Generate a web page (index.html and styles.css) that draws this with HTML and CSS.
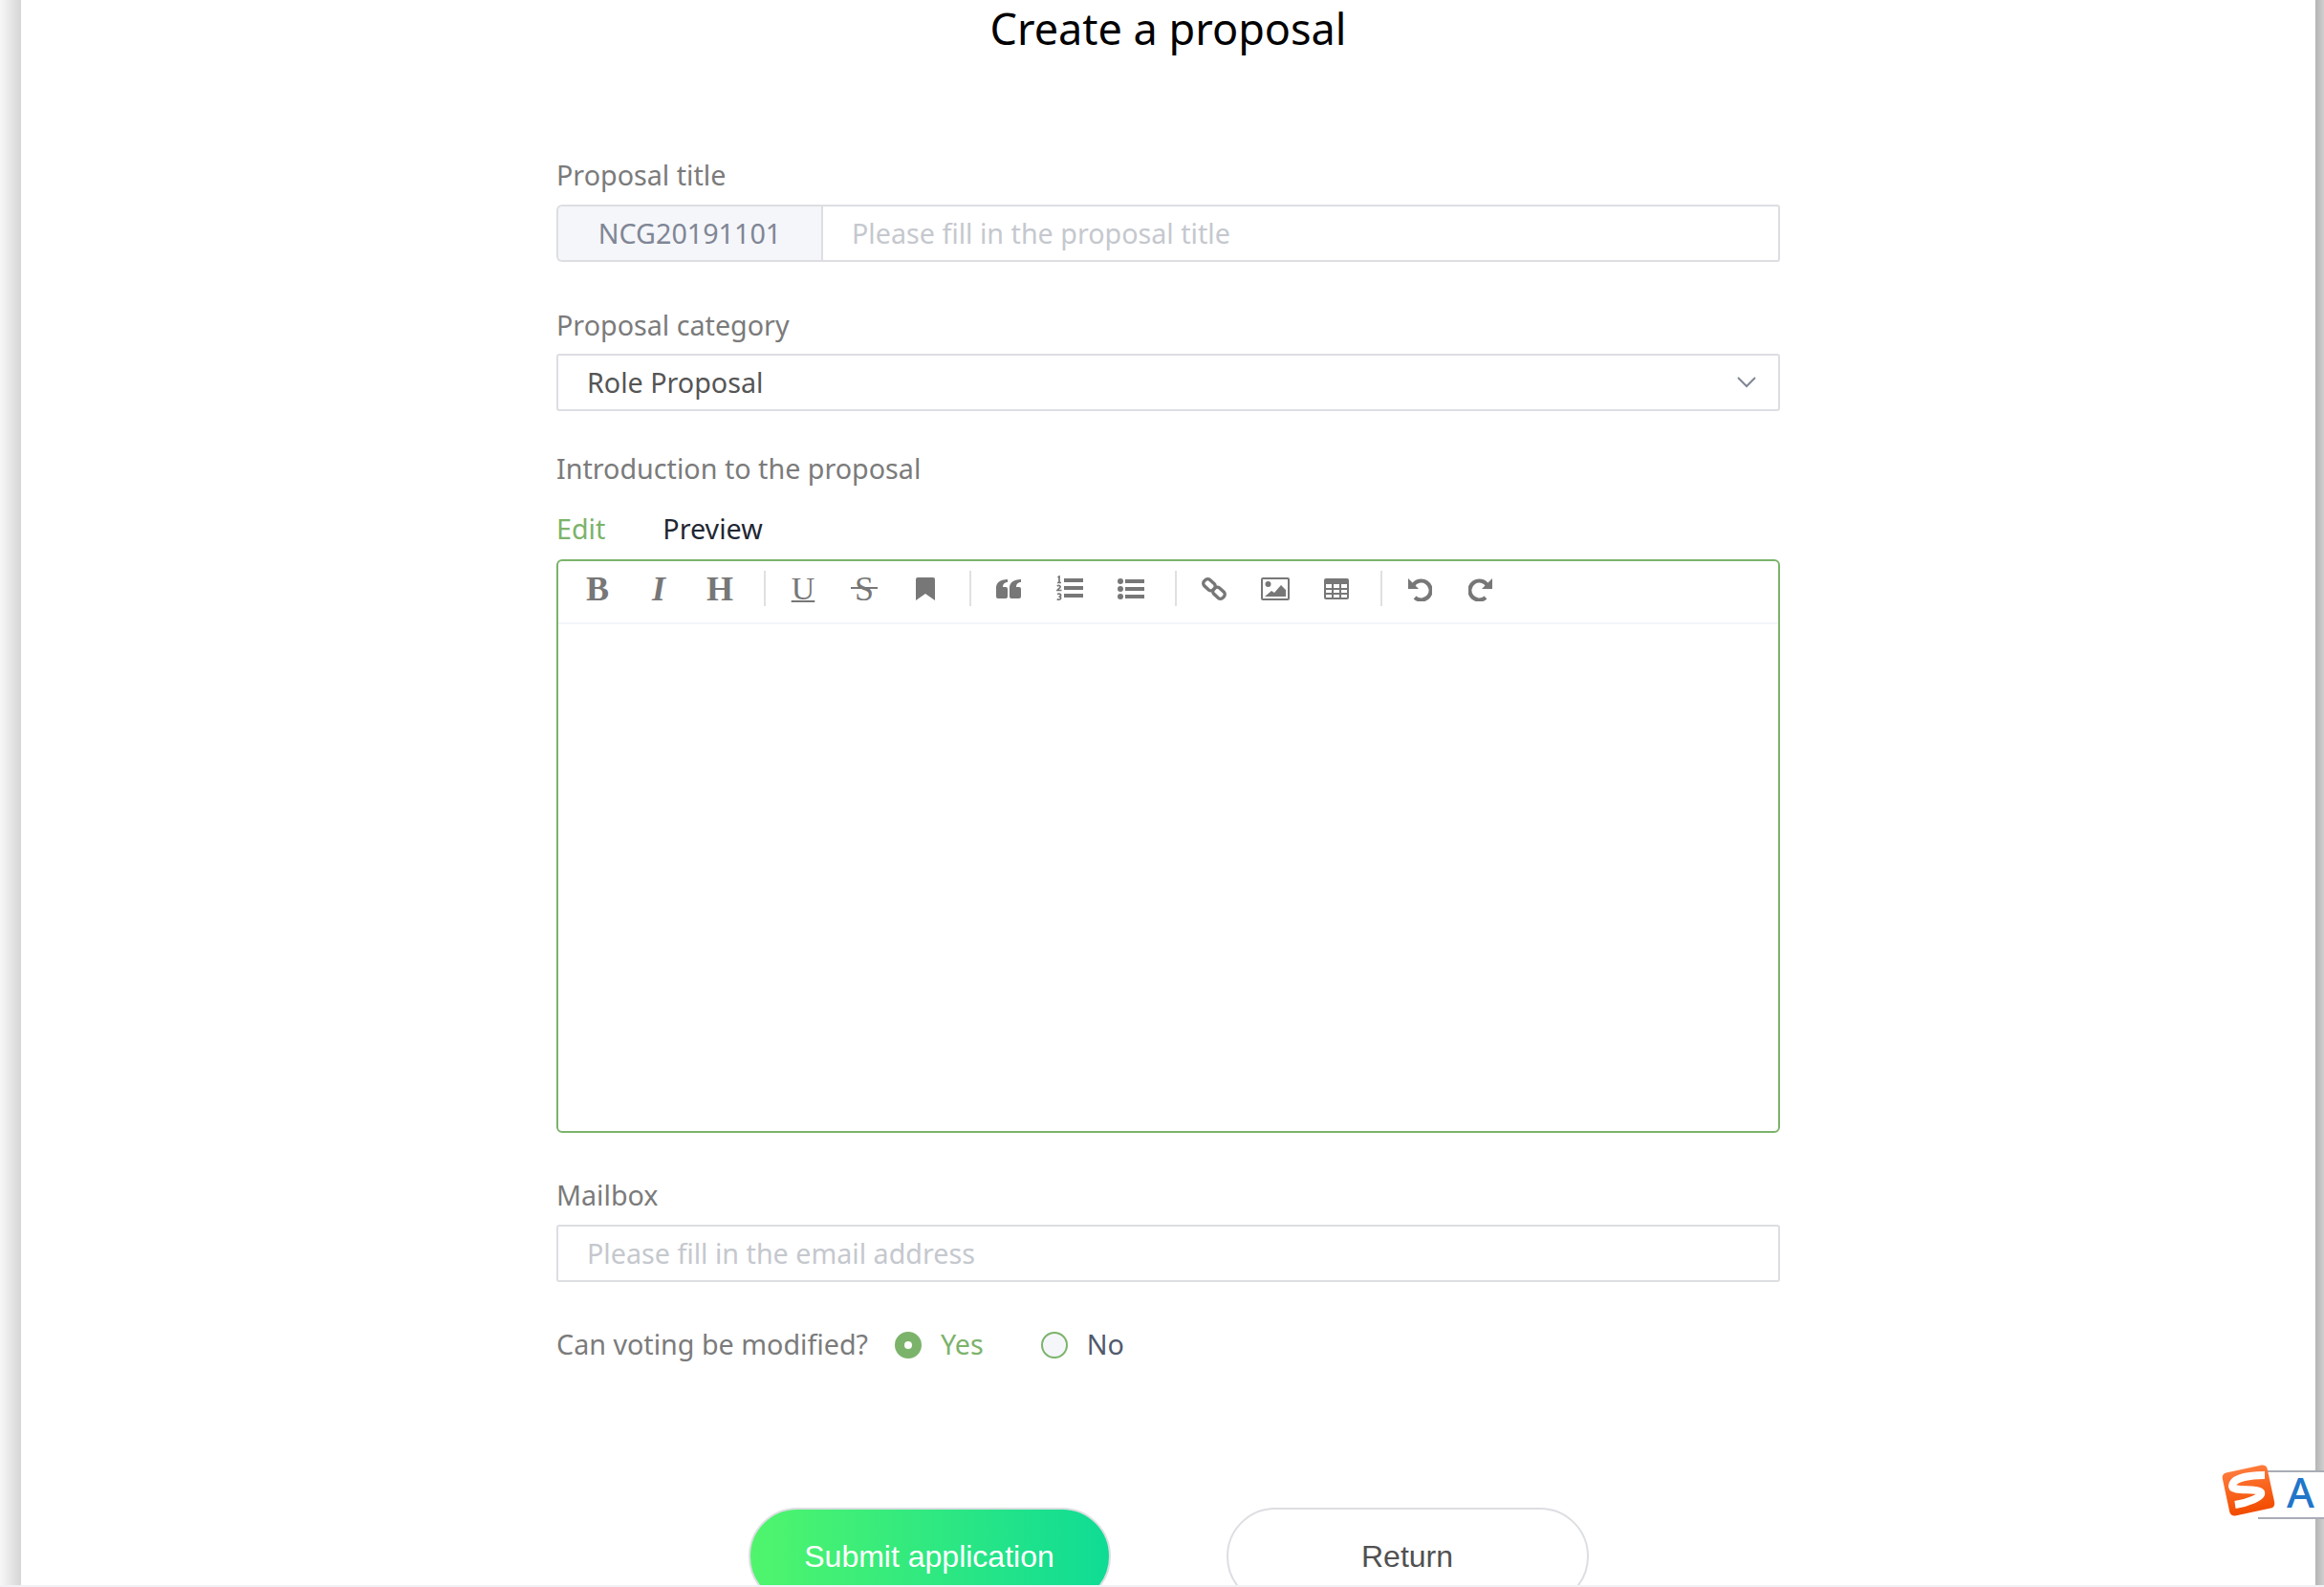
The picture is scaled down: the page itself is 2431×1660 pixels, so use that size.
FILE: index.html
```html
<!DOCTYPE html>
<html lang="en">
<head>
    <meta charset="UTF-8">
    <meta name="viewport" content="width=device-width, initial-scale=1.0">
    <title>Create a proposal</title>
    <link rel="stylesheet" href="styles.css">
</head>
<body>
    <div class="screen">
        <div class="edge-left"></div>
        <main class="page">
            <h1>Create a proposal</h1>
            <form class="proposal-form">
                <div class="field field-title">
                    <label>Proposal title</label>
                    <div class="input-group">
                        <span class="prepend">NCG20191101</span>
                        <input class="text-input" type="text" placeholder="Please fill in the proposal title">
                    </div>
                </div>

                <div class="field field-category">
                    <label>Proposal category</label>
                    <div class="select-box">
                        <span>Role Proposal</span>
                        <svg class="chevron" width="20" height="12" viewBox="0 0 20 12"><path d="M1 1l9 9 9-9" fill="none" stroke="#808695" stroke-width="2"/></svg>
                    </div>
                </div>

                <div class="field field-intro">
                    <label>Introduction to the proposal</label>
                    <div class="tabs">
                        <span class="tab active">Edit</span>
                        <span class="tab">Preview</span>
                    </div>
                    <div class="editor">
                        <div class="toolbar">
                            <span class="tool glyph bold">B</span>
                            <span class="tool glyph italic">I</span>
                            <span class="tool glyph heading">H</span>
                            <i class="sep"></i>
                            <span class="tool glyph under">U</span>
                            <span class="tool glyph strike">S</span>
                            <span class="tool">
                                <svg width="20" height="24" viewBox="0 0 20 24"><path d="M2 0h16a2 2 0 0 1 2 2v22l-10-7-10 7V2a2 2 0 0 1 2-2z" fill="#777"/></svg>
                            </span>
                            <i class="sep"></i>
                            <span class="tool">
                                <svg width="26" height="22" viewBox="0 0 26 22"><path d="M12 1v3C8.5 4 7 6.5 7 9h3a2 2 0 0 1 2 2v8a2 2 0 0 1-2 2H2a2 2 0 0 1-2-2V9.5C0 5 4 1 12 1zM26 1v3c-3.500 0-5 2.500-5 5h3a2 2 0 0 1 2 2v8a2 2 0 0 1-2 2h-8a2 2 0 0 1-2-2V9.5C14 5 18 1 26 1z" fill="#777"/></svg>
                            </span>
                            <span class="tool">
                                <svg width="28" height="28" viewBox="0 0 28 28">
                                    <path d="M8 3h20v4H8zM8 11h20v4H8zM8 19h20v4H8z" fill="#777"/>
                                    <path d="M1.5 2L3 1v6M1 7.5h4M.8 11c2-1.500 4 0 3 1.500L1 15.5h4.500M1 19.5c2-1 4 0 3.500 1.500 0 1-1 1.200-2 1.200 1.200 0 2.500.5 2 2-.5 1.300-2.500 1.300-3.800.5" fill="none" stroke="#777" stroke-width="1.7"/>
                                </svg>
                            </span>
                            <span class="tool">
                                <svg width="28" height="24" viewBox="0 0 28 24">
                                    <path d="M8 2h20v4H8zM8 10h20v4H8zM8 18h20v4H8z" fill="#777"/>
                                    <circle cx="3" cy="4" r="3" fill="#777"/><circle cx="3" cy="12" r="3" fill="#777"/><circle cx="3" cy="20" r="3" fill="#777"/>
                                </svg>
                            </span>
                            <i class="sep"></i>
                            <span class="tool">
                                <svg width="26" height="26" viewBox="0 0 26 26">
                                    <rect x="1.5" y="4.5" width="13" height="8.5" rx="3.5" transform="rotate(42 8 8.7)" fill="none" stroke="#777" stroke-width="3.4"/>
                                    <rect x="11.5" y="13" width="13" height="8.5" rx="3.5" transform="rotate(42 18 17.2)" fill="none" stroke="#777" stroke-width="3.4"/>
                                </svg>
                            </span>
                            <span class="tool">
                                <svg width="30" height="24" viewBox="0 0 30 24">
                                    <rect x="1" y="1" width="28" height="22" rx="1" fill="none" stroke="#777" stroke-width="2"/>
                                    <circle cx="7.5" cy="7" r="3" fill="#777"/>
                                    <path d="M4 20l7-6 3 2 7-8 5 5v7z" fill="#777"/>
                                </svg>
                            </span>
                            <span class="tool">
                                <svg width="26" height="22" viewBox="0 0 26 22">
                                    <rect width="26" height="22" rx="2" fill="#777"/>
                                    <path d="M2 6h6v4H2zM10 6h6v4h-6zM18 6h6v4h-6zM2 12h6v3H2zM10 12h6v3h-6zM18 12h6v3h-6zM2 17h6v3H2zM10 17h6v3h-6zM18 17h6v3h-6z" fill="#fff"/>
                                </svg>
                            </span>
                            <i class="sep"></i>
                            <span class="tool">
                                <svg width="26" height="26" viewBox="0 0 26 26"><path d="M6 9.5A10 10 0 1 1 8 22" fill="none" stroke="#777" stroke-width="4.2"/><path d="M1 2v11h11z" fill="#777"/></svg>
                            </span>
                            <span class="tool">
                                <svg width="26" height="26" viewBox="0 0 26 26"><path d="M20 9.5A10 10 0 1 0 18 22" fill="none" stroke="#777" stroke-width="4.2"/><path d="M25 2v11H14z" fill="#777"/></svg>
                            </span>
                        </div>
                        <div class="editor-body"></div>
                    </div>
                </div>

                <div class="field field-mail">
                    <label>Mailbox</label>
                    <input class="text-input boxed" type="text" placeholder="Please fill in the email address">
                </div>

                <div class="vote-row">
                    <span class="vote-label">Can voting be modified?</span>
                    <span class="radio checked"></span>
                    <span class="radio-text checked-text">Yes</span>
                    <span class="radio"></span>
                    <span class="radio-text">No</span>
                </div>

                <div class="actions">
                    <button type="button" class="btn btn-submit">Submit application</button>
                    <button type="button" class="btn btn-return">Return</button>
                </div>
            </form>
        </main>
        <div class="edge-right"></div>
    </div>

    <!-- input method bar floating over the page -->
    <div class="ime-bar">
        <svg class="ime-logo" width="60" height="58" viewBox="0 0 60 58">
            <defs>
                <linearGradient id="imeFill" x1="0" y1="0" x2="0" y2="1">
                    <stop offset="0" stop-color="#ff7a3a"/>
                    <stop offset="1" stop-color="#f24c00"/>
                </linearGradient>
            </defs>
            <rect x="6" y="6" width="48" height="46" rx="5" transform="rotate(-12 30 29)" fill="url(#imeFill)"/>
            <path d="M47 13C34 13 14 15 13 24c-1 7 26 2 30 7 2 5-14 11-27 13" fill="none" stroke="#fff" stroke-width="8"/>
        </svg>
        <span class="ime-letter">A</span>
    </div>
</body>
</html>
```

FILE: styles.css
```css
* {
    box-sizing: border-box;
}
html, body {
    margin: 0;
    padding: 0;
    height: 100%;
    overflow: hidden;
    background: #fff;
}
body {
    font-family: "Noto Sans", "Open Sans", sans-serif;
    font-size: 28.7px;
    color: #515a6e;
    position: relative;
}
.screen {
    display: flex;
    height: 1660px;
    overflow: hidden;
    border-bottom: 2px solid #f0f0f5;
}
.edge-left {
    width: 22px;
    background: linear-gradient(to right, #f7f7f7, #d6d6d6);
}
.edge-right {
    width: 9px;
    background: linear-gradient(to right, #b4b4b4, #cfcfcf);
}
.page {
    flex: 1;
    background: #fff;
}
h1 {
    margin: 0;
    height: 60px;
    line-height: 60px;
    font-size: 45px;
    font-weight: 400;
    text-align: center;
    color: #000;
}
.proposal-form {
    width: 1280px;
    margin: 103px auto 0;
}
.field label {
    display: block;
    height: 40px;
    line-height: 39px;
    color: #7b7b7b;
}
.field-title label,
.field-mail label {
    margin-bottom: 11px;
}
.field-category {
    margin-top: 46px;
}
.field-category label {
    margin-bottom: 10px;
}
.field-intro {
    margin-top: 40px;
}
.field-mail {
    margin-top: 45px;
}
.input-group {
    display: flex;
    height: 60px;
}
.prepend {
    width: 277px;
    display: flex;
    align-items: center;
    justify-content: center;
    padding-bottom: 2px;
    background: #f5f6fa;
    border: 2px solid #dcdee2;
    border-right: none;
    border-radius: 6px 0 0 6px;
    color: #808695;
}
.text-input {
    flex: 1;
    height: 60px;
    padding: 0 30px 2px;
    border: 2px solid #dcdee2;
    border-radius: 0 3px 3px 0;
    font-family: inherit;
    font-size: 28.7px;
    color: #515a6e;
    outline: none;
}
.text-input::placeholder {
    color: #c5c8ce;
    opacity: 1;
}
.boxed {
    display: block;
    width: 100%;
    border-radius: 3px;
}
.select-box {
    height: 60px;
    display: flex;
    align-items: center;
    justify-content: space-between;
    padding: 0 23px 2px 30px;
    border: 2px solid #dcdee2;
    border-radius: 3px;
    color: #555;
}
.chevron {
    margin-top: 2px;
}
.tabs {
    display: flex;
    gap: 60px;
    margin: 23px 0 12px;
    height: 40px;
    line-height: 39px;
}
.tab {
    color: #1f2733;
}
.tab.active {
    color: #7cb36b;
}
.editor {
    height: 600px;
    border: 2px solid #7cb36b;
    border-radius: 6px;
    background: #fff;
}
.toolbar {
    height: 66px;
    display: flex;
    align-items: center;
    padding: 0 0 7px 9px;
    border-bottom: 2px solid #f2f5fa;
}
.tool {
    width: 64px;
    height: 40px;
    display: flex;
    align-items: center;
    justify-content: center;
    color: #777;
}
.glyph {
    font-family: "Liberation Serif", serif;
    font-size: 36px;
    line-height: 1;
}
.bold {
    font-weight: 700;
}
.italic {
    font-style: italic;
    font-weight: 700;
}
.heading {
    font-weight: 700;
}
.under {
    text-decoration: underline;
    text-decoration-thickness: 2px;
    text-underline-offset: 1px;
    font-size: 34px;
}
.strike {
    position: relative;
    font-size: 36px;
}
.strike::after {
    content: "";
    position: absolute;
    left: 18px;
    top: 18px;
    width: 28px;
    height: 2px;
    background: #777;
}
.sep {
    width: 2px;
    height: 37px;
    margin: 0 7px 0 14px;
    background: #e0e0e0;
}
.editor-body {
    flex: 1;
}
.vote-row {
    display: flex;
    align-items: center;
    margin-top: 46px;
    height: 40px;
}
.vote-label {
    color: #7b7b7b;
    margin-right: 28px;
    padding-bottom: 4px;
}
.radio {
    width: 28px;
    height: 28px;
    border: 2px solid #7cb36b;
    border-radius: 50%;
    background: #f5f6fa;
    margin-right: 20px;
    display: flex;
    align-items: center;
    justify-content: center;
}
.radio.checked {
    background: #7cb36b;
}
.radio.checked::after {
    content: "";
    width: 8px;
    height: 8px;
    border-radius: 50%;
    background: #fff;
}
.radio-text {
    margin-right: 60px;
    padding-bottom: 4px;
}
.checked-text {
    color: #7cb36b;
}
.actions {
    display: flex;
    justify-content: center;
    gap: 121px;
    margin-top: 150px;
}
.btn {
    width: 379px;
    height: 102px;
    border: 2px solid #dcdee2;
    border-radius: 51px;
    font-family: "Liberation Sans", Arial, sans-serif;
    font-size: 32px;
    cursor: pointer;
}
.btn-submit {
    color: #fff;
    background: linear-gradient(to right, #50f56c, #0fdc95);
}
.btn-return {
    color: #515151;
    background: #fff;
}
.ime-bar {
    position: absolute;
    left: 2322px;
    top: 1530px;
    width: 109px;
    height: 60px;
}
.ime-bar::before {
    content: "";
    position: absolute;
    left: 40px;
    right: 0;
    top: 8px;
    height: 47px;
    background: #fff;
    border-top: 2px solid #a8acb5;
    border-bottom: 2px solid #a8acb5;
}
.ime-logo {
    position: absolute;
    left: 0;
    top: 0;
}
.ime-letter {
    position: absolute;
    left: 70px;
    top: 7px;
    font-size: 44px;
    line-height: 46px;
    font-weight: 500;
    color: #2176c9;
}
```
